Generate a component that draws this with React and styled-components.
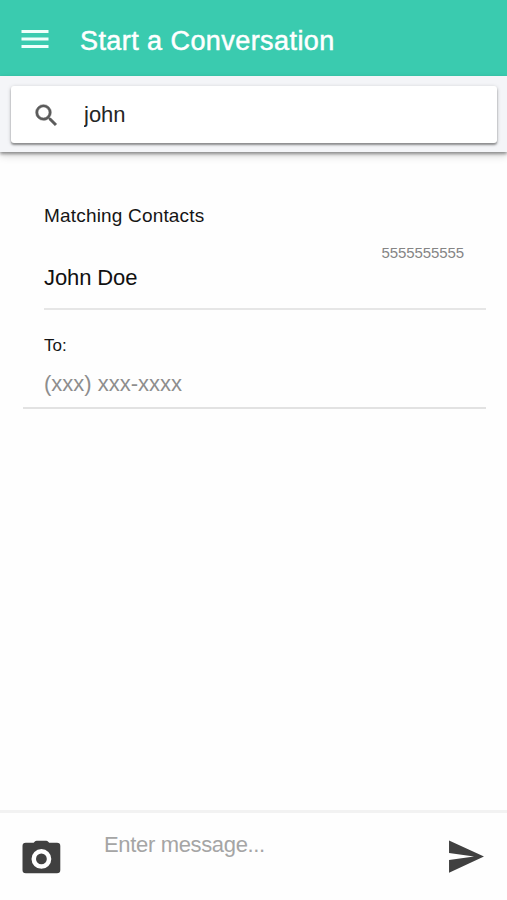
import React, { useState } from 'react';
import styled, { createGlobalStyle } from 'styled-components';

const GlobalStyle = createGlobalStyle`
  * {
    box-sizing: border-box;
  }

  body {
    margin: 0;
    background: #fefefe;
    font-family: "Liberation Sans", Arial, sans-serif;
  }
`;

const Page = styled.div`
  height: 900px;
  display: flex;
  flex-direction: column;
  overflow: hidden;
`;

const Header = styled.header`
  height: 76px;
  flex: none;
  display: flex;
  align-items: center;
  padding: 2px 16px 0 17px;
  background: #3acbaf;
`;

const IconButton = styled.button`
  display: flex;
  padding: 0;
  border: none;
  background: none;
  color: ${props => props.$color || '#404040'};
  cursor: pointer;

  svg {
    display: block;
    fill: currentColor;
  }
`;

const Title = styled.h1`
  margin: 3px 0 0 27px;
  font-size: 27px;
  font-weight: 400;
  line-height: 32px;
  letter-spacing: 0.43px;
  color: #fff;
  -webkit-text-stroke: 0.5px #fff;
`;

const SearchBar = styled.div`
  height: 76px;
  flex: none;
  padding: 10px 10px 9px 11px;
  background: #f4f5f8;
  box-shadow: 0 2px 3px rgba(0, 0, 0, 0.38), 0 4px 8px rgba(0, 0, 0, 0.14);
`;

const SearchBox = styled.label`
  height: 57px;
  display: flex;
  align-items: center;
  padding: 1px 0 0 21px;
  border-radius: 3px;
  background: #fff;
  color: #5b5b5b;
  box-shadow: 0 2px 2px rgba(0, 0, 0, 0.34), 0 1px 4px rgba(0, 0, 0, 0.2);

  svg {
    flex: none;
    fill: currentColor;
    stroke: currentColor;
    stroke-width: 0.4px;
  }
`;

const Input = styled.input`
  flex: 1;
  min-width: 0;
  padding: 0;
  border: none;
  outline: none;
  background: none;
  font-family: inherit;
  font-size: 22px;
  line-height: 28px;
  height: 28px;
  letter-spacing: ${props => props.$spacing || 0}px;
  color: #252525;

  &::placeholder {
    color: ${props => props.$hint || '#8d8d8d'};
    opacity: 1;
  }
`;

const SearchInput = styled(Input)`
  margin-left: 23px;
`;

const Content = styled.main`
  flex: 1;
  padding: 52px 21px 0 23px;
`;

const ListHeader = styled.h2`
  margin: 0 0 0 21px;
  font-size: 19px;
  font-weight: 400;
  line-height: 24px;
  letter-spacing: 0.18px;
  color: #151515;
`;

const Contact = styled.div`
  height: 82px;
  margin-left: 21px;
  padding: 15px 22px 0 0;
  border-bottom: 2px solid #e6e6e6;
`;

const Phone = styled.div`
  font-size: 15px;
  line-height: 20px;
  letter-spacing: -0.08px;
  text-align: right;
  color: #858585;
`;

const Name = styled.div`
  margin-top: 1px;
  font-size: 22px;
  line-height: 28px;
  letter-spacing: -0.1px;
  color: #111;
`;

const Recipient = styled.label`
  display: flex;
  flex-direction: column;
  height: 99px;
  padding: 25px 0 0 21px;
  border-bottom: 2px solid #e2e2e2;

  input {
    flex: none;
    margin-top: 13px;
  }
`;

const Caption = styled.span`
  font-size: 17px;
  line-height: 22px;
  color: #151515;
`;

const Footer = styled.footer`
  height: 90px;
  flex: none;
  display: flex;
  align-items: flex-start;
  padding: 21px 19px 0 22px;
  border-top: 3px solid #f2f2f2;
`;

const CameraButton = styled(IconButton)`
  margin-top: 6px;
`;

const SendButton = styled(IconButton)`
  margin-top: 1px;
`;

const MessageInput = styled(Input)`
  margin: -3px 0 0 43px;
`;

const MenuIcon = () => (
  <svg width="36" height="36" viewBox="0 0 24 24">
    <path d="M3 18h18v-2H3v2zm0-5h18v-2H3v2zm0-7v2h18V6H3z" />
  </svg>
);

const SearchIcon = () => (
  <svg width="29" height="29" viewBox="0 0 24 24">
    <path d="M15.5 14h-.79l-.28-.27A6.471 6.471 0 0 0 16 9.5 6.5 6.5 0 1 0 9.5 16c1.61 0 3.09-.59 4.23-1.57l.27.28v.79l5 4.99L20.49 19l-4.99-5zm-6 0C7.01 14 5 11.99 5 9.5S7.01 5 9.5 5 14 7.01 14 9.5 11.99 14 9.5 14z" />
  </svg>
);

const CameraIcon = () => (
  <svg width="39" height="34" viewBox="0 0 39 34">
    <path
      fillRule="evenodd"
      d="M14.7 0.8h9.4q1.3 0 2.1 0.9l1 1.1h7.8q3.3 0 3.3 3.3v23.8q0 3.3-3.3 3.3H3.8q-3.3 0-3.3-3.3V6.100q0-3.300 3.300-3.300h7.800l1-1.100q0.800-0.900 2.100-0.900zM19.400 9a9.900 9.900 0 1 0 0 19.800 9.900 9.900 0 0 0 0-19.800z"
    />
    <circle cx="19.400" cy="18.900" r="5.400" />
  </svg>
);

const SendIcon = () => (
  <svg width="43" height="43" viewBox="0 0 512 512">
    <path d="M48 448l416-192L48 64v149.333L346 256 48 298.667z" />
  </svg>
);

const App = () => {
  const [search, setSearch] = useState('john');
  const [recipient, setRecipient] = useState('');
  const [message, setMessage] = useState('');

  return (
    <Page>
      <GlobalStyle />
      <Header>
        <IconButton $color="#effffb" aria-label="Menu">
          <MenuIcon />
        </IconButton>
        <Title>Start a Conversation</Title>
      </Header>

      <SearchBar>
        <SearchBox>
          <SearchIcon />
          <SearchInput value={search} onChange={(e) => setSearch(e.target.value)} />
        </SearchBox>
      </SearchBar>

      <Content>
        <ListHeader>Matching Contacts</ListHeader>
        <Contact>
          <Phone>5555555555</Phone>
          <Name>John Doe</Name>
        </Contact>
        <Recipient>
          <Caption>To:</Caption>
          <Input
            placeholder="(xxx) xxx-xxxx"
            value={recipient}
            onChange={(e) => setRecipient(e.target.value)}
          />
        </Recipient>
      </Content>

      <Footer>
        <CameraButton aria-label="Take photo">
          <CameraIcon />
        </CameraButton>
        <MessageInput
          $hint="#a5a5a5"
          $spacing={-0.34}
          placeholder="Enter message..."
          value={message}
          onChange={(e) => setMessage(e.target.value)}
        />
        <SendButton aria-label="Send">
          <SendIcon />
        </SendButton>
      </Footer>
    </Page>
  );
};

export default App;
